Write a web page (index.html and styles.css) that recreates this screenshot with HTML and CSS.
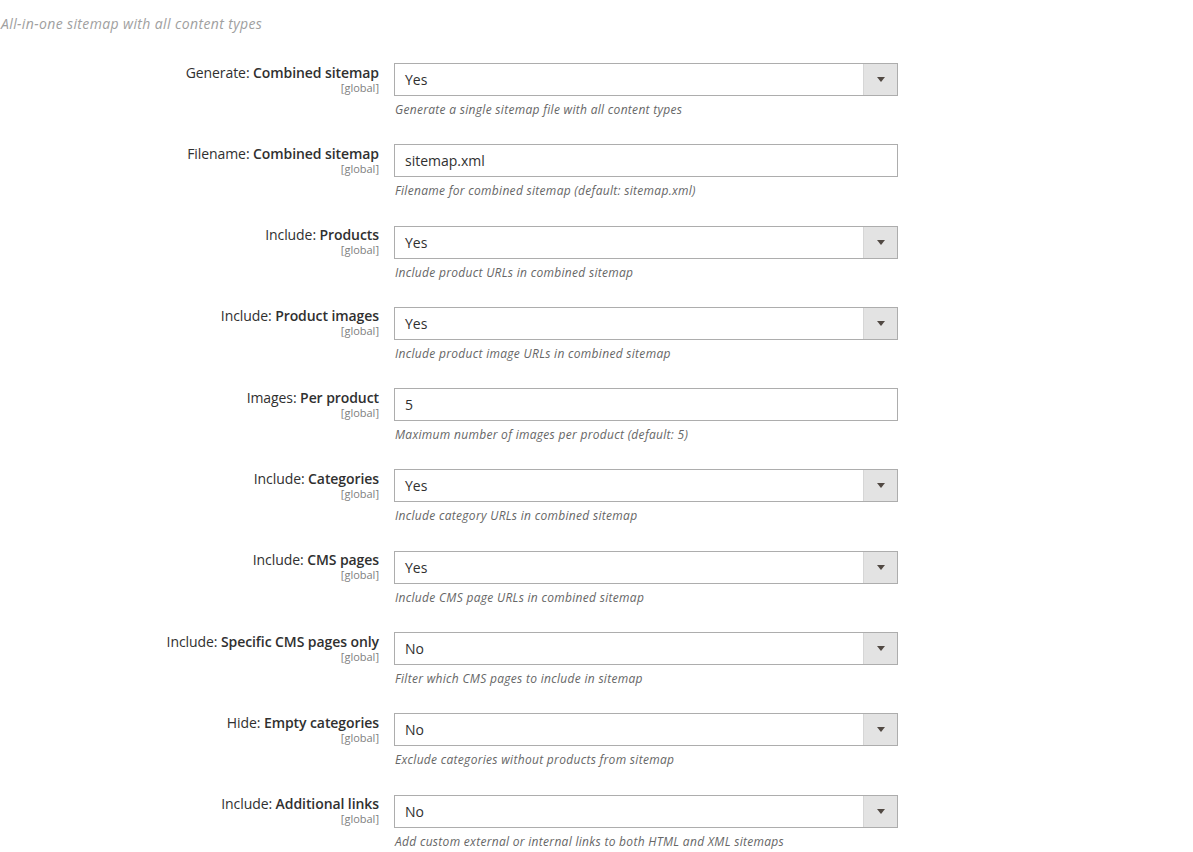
FILE: index.html
```html
<!DOCTYPE html>
<html lang="en">
<head>
<meta charset="utf-8">
<title>Sitemap configuration</title>
<link rel="stylesheet" href="styles.css">
</head>
<body>
<div class="section">
  <p class="section-comment">All-in-one sitemap with all content types</p>
  <div class="fields">
    <div class="row">
      <div class="label"><span>Generate: <b>Combined sitemap</b></span><span class="scope">[global]</span></div>
      <div class="control">
        <div class="select"><span class="value">Yes</span><span class="arrow"></span></div>
        <p class="note">Generate a single sitemap file with all content types</p>
      </div>
    </div>
    <div class="row">
      <div class="label"><span>Filename: <b>Combined sitemap</b></span><span class="scope">[global]</span></div>
      <div class="control">
        <div class="input">sitemap.xml</div>
        <p class="note">Filename for combined sitemap (default: sitemap.xml)</p>
      </div>
    </div>
    <div class="row">
      <div class="label"><span>Include: <b>Products</b></span><span class="scope">[global]</span></div>
      <div class="control">
        <div class="select"><span class="value">Yes</span><span class="arrow"></span></div>
        <p class="note">Include product URLs in combined sitemap</p>
      </div>
    </div>
    <div class="row">
      <div class="label"><span>Include: <b>Product images</b></span><span class="scope">[global]</span></div>
      <div class="control">
        <div class="select"><span class="value">Yes</span><span class="arrow"></span></div>
        <p class="note">Include product image URLs in combined sitemap</p>
      </div>
    </div>
    <div class="row">
      <div class="label"><span>Images: <b>Per product</b></span><span class="scope">[global]</span></div>
      <div class="control">
        <div class="input">5</div>
        <p class="note">Maximum number of images per product (default: 5)</p>
      </div>
    </div>
    <div class="row">
      <div class="label"><span>Include: <b>Categories</b></span><span class="scope">[global]</span></div>
      <div class="control">
        <div class="select"><span class="value">Yes</span><span class="arrow"></span></div>
        <p class="note">Include category URLs in combined sitemap</p>
      </div>
    </div>
    <div class="row">
      <div class="label"><span>Include: <b>CMS pages</b></span><span class="scope">[global]</span></div>
      <div class="control">
        <div class="select"><span class="value">Yes</span><span class="arrow"></span></div>
        <p class="note">Include CMS page URLs in combined sitemap</p>
      </div>
    </div>
    <div class="row">
      <div class="label"><span>Include: <b>Specific CMS pages only</b></span><span class="scope">[global]</span></div>
      <div class="control">
        <div class="select"><span class="value">No</span><span class="arrow"></span></div>
        <p class="note">Filter which CMS pages to include in sitemap</p>
      </div>
    </div>
    <div class="row">
      <div class="label"><span>Hide: <b>Empty categories</b></span><span class="scope">[global]</span></div>
      <div class="control">
        <div class="select"><span class="value">No</span><span class="arrow"></span></div>
        <p class="note">Exclude categories without products from sitemap</p>
      </div>
    </div>
    <div class="row">
      <div class="label"><span>Include: <b>Additional links</b></span><span class="scope">[global]</span></div>
      <div class="control">
        <div class="select"><span class="value">No</span><span class="arrow"></span></div>
        <p class="note">Add custom external or internal links to both HTML and XML sitemaps</p>
      </div>
    </div>
  </div>
</div>
</body>
</html>
```
FILE: styles.css
```css
html, body {
  margin: 0;
  padding: 0;
  background: #ffffff;
}

body {
  font-family: "Open Sans", "Liberation Sans", sans-serif;
  color: #303030;
  font-size: 14px;
}

.section-comment {
  margin: 0;
  padding: 14px 0 0 1px;
  font-size: 14px;
  line-height: 20px;
  font-style: italic;
  letter-spacing: 0.38px;
  color: #a0a0a0;
}

.fields {
  display: flex;
  flex-direction: column;
  padding-top: 29px;
}

.row {
  display: grid;
  grid-template-columns: 379px 504px;
  column-gap: 15px;
  padding-bottom: 26.3px;
}

.label {
  display: flex;
  flex-direction: column;
  align-items: flex-end;
  text-align: right;
  line-height: 17px;
  padding-top: 0.5px;
  letter-spacing: -0.08px;
}

.label b {
  font-weight: 600;
}

.scope {
  font-size: 11px;
  line-height: 13px;
  letter-spacing: 0;
  color: #808080;
}

.select,
.input {
  box-sizing: border-box;
  height: 33px;
  border: 1px solid #adadad;
  background: #ffffff;
  display: flex;
  align-items: center;
  font-size: 14px;
}

.input {
  padding: 0 10px;
}

.select .value {
  flex: 1;
  padding-left: 10px;
}

.select .arrow {
  width: 33px;
  align-self: stretch;
  background: #e3e3e3;
  border-left: 1px solid #d6d6d6;
  display: flex;
  align-items: center;
  justify-content: center;
}

.select .arrow::after {
  content: "";
  width: 0;
  height: 0;
  border-left: 4px solid transparent;
  border-right: 4px solid transparent;
  border-top: 5px solid #514943;
}

.note {
  margin: 5px 0 0 1px;
  font-size: 12px;
  line-height: 17px;
  font-style: italic;
  letter-spacing: 0.3px;
  color: #666666;
}
```
